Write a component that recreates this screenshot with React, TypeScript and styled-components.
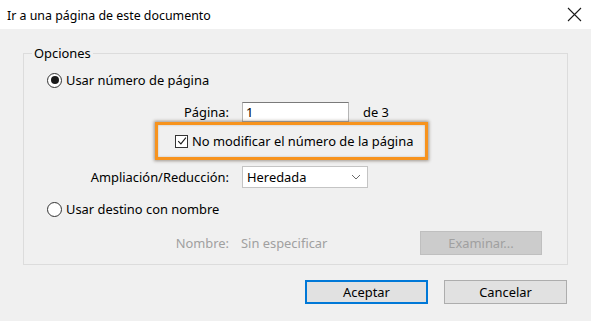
import React from 'react';
import styled, { createGlobalStyle } from 'styled-components';

const GlobalStyle = createGlobalStyle`
  html, body {
    margin: 0;
    padding: 0;
    background: #f0f0f0;
  }
  body {
    font-family: 'Noto Sans', 'Open Sans', sans-serif;
    font-size: 12.9px;
    color: #000;
  }
`;

export default function App() {
  return (
    <>
      <GlobalStyle />
      <Dialog>
        <TitleBar>
          <Title>Ir a una página de este documento</Title>
          <CloseButton aria-label="Cerrar">
            <svg width="15" height="15" viewBox="0 0 15 15">
              <path d="M1 1 L14 14 M14 1 L1 14" stroke="#1a1a1a" strokeWidth="1.1" fill="none" />
            </svg>
          </CloseButton>
        </TitleBar>

        <Body>
          <Group>
            <Legend>Opciones</Legend>

            <RadioRow>
              <Radio checked />
              <span>Usar número de página</span>
            </RadioRow>

            <FieldRow $top={12}>
              <Label>Página:</Label>
              <TextInput>1</TextInput>
              <Suffix>de 3</Suffix>
            </FieldRow>

            <Highlight>
              <Checkbox>
                <svg width="10" height="10" viewBox="0 0 10 10">
                  <path d="M1.2 5.2 L3.9 7.9 L8.9 1.6" stroke="#1a1a1a" strokeWidth="1.1" fill="none" />
                </svg>
              </Checkbox>
              <span>No modificar el número de la página</span>
            </Highlight>

            <FieldRow $top={6}>
              <Label>Ampliación/Reducción:</Label>
              <Select>
                <span>Heredada</span>
                <svg width="10" height="6" viewBox="0 0 10 6">
                  <path d="M1 1 L5 5 L9 1" stroke="#6a6a6a" strokeWidth="1" fill="none" />
                </svg>
              </Select>
            </FieldRow>

            <RadioRow $top={11}>
              <Radio />
              <span>Usar destino con nombre</span>
            </RadioRow>

            <FieldRow $top={12} $disabled>
              <Label>Nombre:</Label>
              <Value>Sin especificar</Value>
              <BrowseButton disabled>Examinar...</BrowseButton>
            </FieldRow>
          </Group>

          <Actions>
            <Button $primary>Aceptar</Button>
            <Button>Cancelar</Button>
          </Actions>
        </Body>
      </Dialog>
    </>
  );
}

const Dialog = styled.div`
  width: 591px;
  height: 321px;
  background: #f0f0f0;
  display: flex;
  flex-direction: column;
  overflow: hidden;
`;

const TitleBar = styled.div`
  height: 29px;
  background: #fff;
  display: flex;
  align-items: center;
  padding: 0 9px 0 7px;
  box-sizing: border-box;
`;

const Title = styled.div`
  flex: 1;
  margin-top: 1px;
  font-size: 12.4px;
`;

const CloseButton = styled.div`
  display: flex;
  margin-top: -1px;
`;

const Body = styled.div`
  padding: 16px 0 0 23px;
  display: flex;
  flex-direction: column;
`;

const Group = styled.fieldset`
  margin: 0;
  width: 545px;
  box-sizing: border-box;
  border: 1px solid #dcdcdc;
  padding: 0 0 9px 0;
  min-width: 0;
  display: flex;
  flex-direction: column;
`;

const Legend = styled.legend`
  margin-left: 8px;
  padding: 0 2px;
  line-height: 16px;
`;

const RadioRow = styled.div<{ $top?: number }>`
  display: flex;
  align-items: center;
  gap: 4px;
  height: 20px;
  margin-top: ${(p) => p.$top ?? 9}px;
  padding-left: 23px;
`;

const Radio = styled.span<{ checked?: boolean }>`
  width: 13px;
  height: 13px;
  border: 1px solid #333;
  border-radius: 50%;
  background: #fff;
  display: flex;
  align-items: center;
  justify-content: center;
  &::after {
    content: '';
    width: 8px;
    height: 8px;
    border-radius: 50%;
    background: ${(p) => (p.checked ? '#1a1a1a' : 'transparent')};
  }
`;

const FieldRow = styled.div<{ $top: number; $disabled?: boolean }>`
  display: flex;
  align-items: center;
  margin-top: ${(p) => p.$top}px;
  padding-right: 25px;
  color: ${(p) => (p.$disabled ? '#a0a0a0' : '#000')};
`;

const Label = styled.div`
  width: 205px;
  text-align: right;
  margin-right: 13px;
`;

const TextInput = styled.div`
  width: 107px;
  height: 20px;
  box-sizing: border-box;
  background: #fff;
  border: 1px solid #7a7a7a;
  border-color: #7a7a7a #b5b5b5 #b5b5b5 #b5b5b5;
  padding-left: 3px;
  line-height: 18px;
`;

const Suffix = styled.div`
  margin-left: 14px;
`;

const Highlight = styled.div`
  margin-left: 131px;
  width: 273px;
  height: 38px;
  box-sizing: border-box;
  border: 3px solid #f7931e;
  box-shadow: 0 0 3px 1px rgba(60, 40, 20, 0.45), inset 0 0 2px rgba(60, 40, 20, 0.3);
  display: flex;
  align-items: center;
  gap: 4px;
  padding-left: 17px;
`;

const Checkbox = styled.span`
  width: 13px;
  height: 13px;
  box-sizing: border-box;
  border: 1px solid #333;
  background: #fff;
  display: flex;
  align-items: center;
  justify-content: center;
`;

const Select = styled.div`
  width: 126px;
  height: 22px;
  box-sizing: border-box;
  background: #fff;
  border: 1px solid #c4c4c4;
  display: flex;
  align-items: center;
  justify-content: space-between;
  padding: 0 6px 0 4px;
`;

const Value = styled.div`
  margin-left: -1px;
`;

const BrowseButton = styled.button`
  margin-left: auto;
  width: 122px;
  height: 24px;
  background: #cccccc;
  border: 1px solid #bfbfbf;
  color: #a0a0a0;
  font: inherit;
  padding: 0;
`;

const Actions = styled.div`
  display: flex;
  gap: 16px;
  margin-top: 15px;
  padding-left: 282px;
`;

const Button = styled.button<{ $primary?: boolean }>`
  width: 123px;
  height: 24px;
  box-sizing: border-box;
  background: #e1e1e1;
  border: ${(p) => (p.$primary ? '2px solid #0078d7' : '1px solid #adadad')};
  font: inherit;
  color: #000;
  padding: 0;
`;
